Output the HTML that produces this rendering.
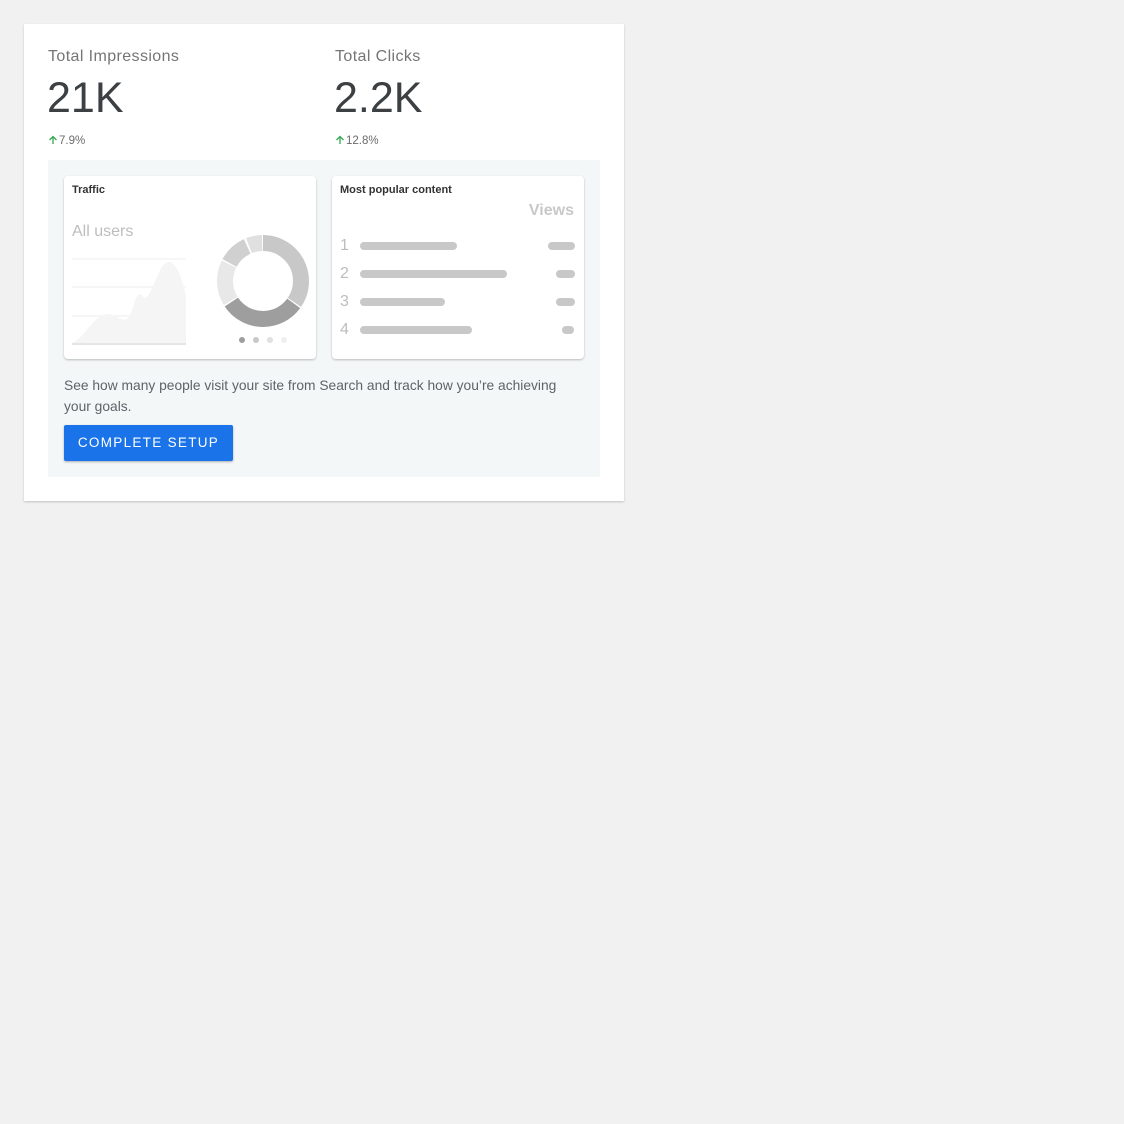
<!DOCTYPE html>
<html><head><style>
body{margin:0;background:#f1f1f1;font-family:"Liberation Sans",Roboto,sans-serif;width:1124px;height:1124px;position:relative}
.card{position:absolute;left:24px;top:24px;width:600px;height:477px;background:#fff;box-shadow:0 1px 2px rgba(0,0,0,.2)}
.lbl{position:absolute;font-size:16px;color:#757575;letter-spacing:.4px}
.big{position:absolute;font-size:43px;color:#3c4043}
.pct{position:absolute;font-size:11.5px;color:#6b6b6b}
.pct svg{vertical-align:-1px;margin-right:1px}
.panel{position:absolute;left:24px;top:136px;width:552px;height:317px;background:#f4f7f8}
.mini{position:absolute;top:16px;width:252px;height:183px;background:#fff;border-radius:4px;box-shadow:0 1px 2px rgba(0,0,0,.25)}
.t{position:absolute;left:8px;top:8px;font-size:11px;font-weight:bold;color:#333}
.bar{position:absolute;height:8px;border-radius:4px;background:#c8c8c8}
.num{position:absolute;left:8px;font-size:16px;color:#bdbdbd}
.btn{position:absolute;left:16px;top:265px;width:169px;height:36px;background:#1a73e8;color:#fff;border-radius:2px;font-size:13.5px;letter-spacing:1.3px;text-align:center;line-height:36px;font-weight:500;box-shadow:0 1px 2px rgba(0,0,0,.3)}
</style></head><body>
<div class="card">
<div class="lbl" style="left:24px;top:24px">Total Impressions</div>
<div class="lbl" style="left:311px;top:24px">Total Clicks</div>
<div class="big" style="left:23px;top:50px">21K</div>
<div class="big" style="left:310px;top:50px">2.2K</div>
<div class="pct" style="left:24px;top:111px"><svg width="10" height="10" viewBox="0 0 10 10"><path d="M5 9V1.5M1.5 5L5 1.5 8.5 5" stroke="#34a853" stroke-width="1.3" fill="none"/></svg>7.9%</div>
<div class="pct" style="left:311px;top:111px"><svg width="10" height="10" viewBox="0 0 10 10"><path d="M5 9V1.5M1.5 5L5 1.5 8.5 5" stroke="#34a853" stroke-width="1.3" fill="none"/></svg>12.8%</div>
<div class="panel">
<div class="mini" style="left:16px">
<div class="t">Traffic</div>
<div style="position:absolute;left:8px;top:47px;font-size:16px;color:#bdbdbd">All users</div>
<svg style="position:absolute;left:8px;top:80px" width="114" height="90">
<line x1="0" y1="3" x2="114" y2="3" stroke="#eee"/>
<line x1="0" y1="31" x2="114" y2="31" stroke="#eee"/>
<line x1="0" y1="60" x2="114" y2="60" stroke="#eee"/>
<path d="M0 87 C15 80 20 60 35 58 C45 58 48 66 55 63 C62 55 62 40 68 38 C72 40 72 44 76 40 C85 25 88 5 98 6 C104 8 110 20 114 40 L114 88 L0 88Z" fill="#f5f5f5"/>
<line x1="0" y1="88" x2="114" y2="88" stroke="#e6e6e6" stroke-width="2"/>
</svg>
<svg style="position:absolute;left:152px;top:58px" width="94" height="94" viewBox="0 0 94 94">
<g transform="rotate(-90 47 47)" fill="none" stroke-width="16">
<circle cx="47" cy="47" r="38" stroke="#c8c8c8" stroke-dasharray="82.3 300"/>
<circle cx="47" cy="47" r="38" stroke="#9e9e9e" stroke-dasharray="73 300" stroke-dashoffset="-83.5"/>
<circle cx="47" cy="47" r="38" stroke="#e8e8e8" stroke-dasharray="38.5 300" stroke-dashoffset="-157.8"/>
<circle cx="47" cy="47" r="38" stroke="#d0d0d0" stroke-dasharray="24.5 300" stroke-dashoffset="-197.6"/>
<circle cx="47" cy="47" r="38" stroke="#e0e0e0" stroke-dasharray="13.5 300" stroke-dashoffset="-224"/>
</g></svg>
<div style="position:absolute;left:175px;top:161px;width:6px;height:6px;border-radius:3px;background:#9e9e9e"></div>
<div style="position:absolute;left:189px;top:161px;width:6px;height:6px;border-radius:3px;background:#c8c8c8"></div>
<div style="position:absolute;left:203px;top:161px;width:6px;height:6px;border-radius:3px;background:#e0e0e0"></div>
<div style="position:absolute;left:217px;top:161px;width:6px;height:6px;border-radius:3px;background:#eeeeee"></div>
</div>
<div class="mini" style="left:284px">
<div class="t">Most popular content</div>
<div style="position:absolute;right:10px;top:26px;font-size:16px;font-weight:bold;color:#c8c8c8">Views</div>
<div class="num" style="top:61px">1</div><div class="bar" style="left:28px;top:66px;width:97px"></div><div class="bar" style="left:216px;top:66px;width:27px"></div>
<div class="num" style="top:89px">2</div><div class="bar" style="left:28px;top:94px;width:147px"></div><div class="bar" style="left:224px;top:94px;width:19px"></div>
<div class="num" style="top:117px">3</div><div class="bar" style="left:28px;top:122px;width:85px"></div><div class="bar" style="left:224px;top:122px;width:19px"></div>
<div class="num" style="top:145px">4</div><div class="bar" style="left:28px;top:150px;width:112px"></div><div class="bar" style="left:230px;top:150px;width:12px"></div>
</div>
<div style="position:absolute;left:16px;top:215px;width:500px;font-size:13.8px;line-height:21px;color:#5f6368">See how many people visit your site from Search and track how you’re achieving your goals.</div>
<div class="btn">COMPLETE SETUP</div>
</div>
</div>
</body></html>
